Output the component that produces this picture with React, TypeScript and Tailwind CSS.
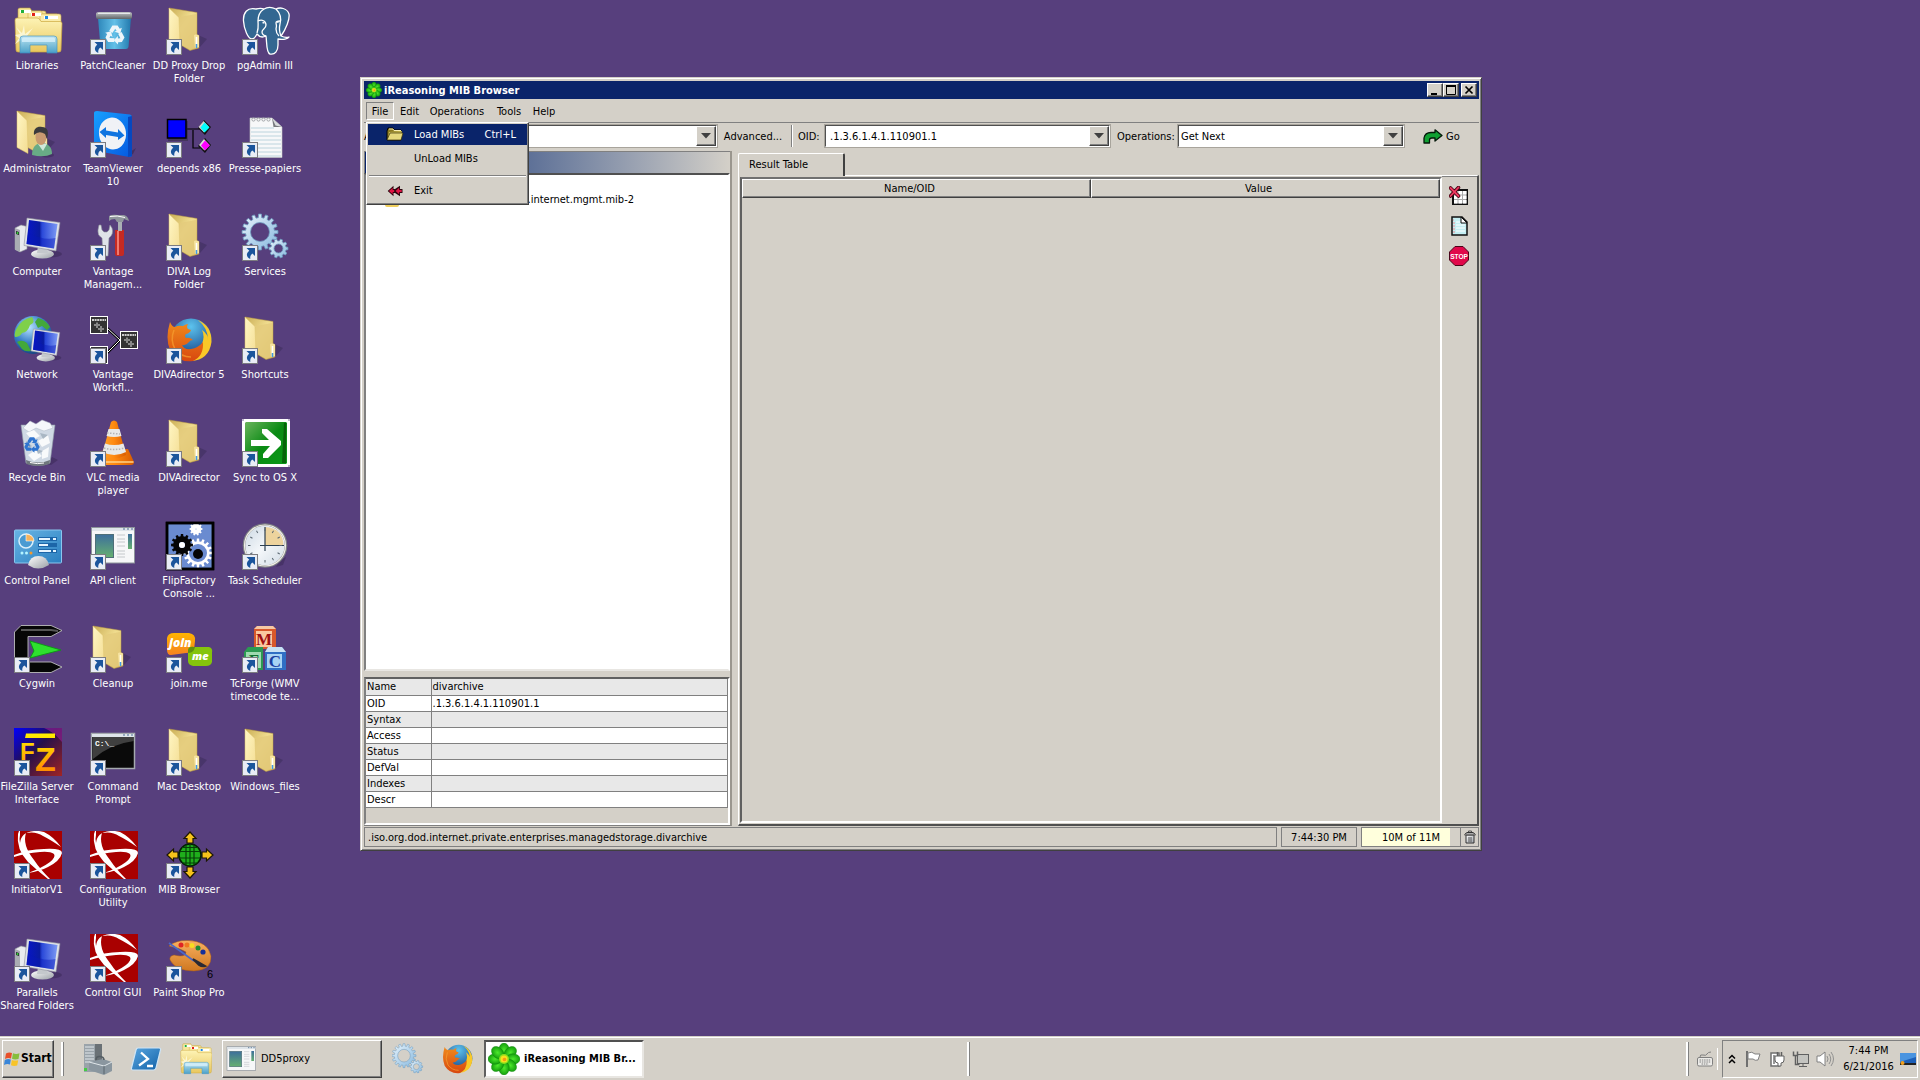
import React from 'react';

type GearProps = { cx: number; cy: number; r: number; hole: number; teeth: number; fill: string; stroke?: string; inner?: string };

function Gear({ cx, cy, r, hole, teeth, fill, stroke = 'none', inner }: GearProps) {
  const points: string[] = [];
  const root = r * 0.8;
  for (let i = 0; i < teeth; i++) {
    const step = (Math.PI * 2) / teeth;
    const a = i * step;
    [[-0.3, root], [-0.2, r], [0.2, r], [0.3, root]].forEach(([k, rad]) => {
      points.push(`${(cx + Math.cos(a + k * step) * rad).toFixed(2)} ${(cy + Math.sin(a + k * step) * rad).toFixed(2)}`);
    });
  }
  const d = `M${points.join('L')}Z M${cx - hole} ${cy}a${hole} ${hole} 0 1 0 ${hole * 2} 0a${hole} ${hole} 0 1 0 ${-hole * 2} 0Z`;
  return (
    <>
      <path d={d} fill={fill} stroke={stroke} strokeWidth="0.8" fillRule="evenodd" />
      {inner && <circle cx={cx} cy={cy} r={hole} fill={inner} />}
    </>
  );
}

function SharedDefs() {
  return (
    <svg className="absolute size-0" aria-hidden="true">
      <defs>
        <linearGradient id="folderBack" x1="0" x2="1" y1="0" y2="1">
          <stop offset="0" stopColor="#c9ad55" /><stop offset=".45" stopColor="#f0dc8e" /><stop offset="1" stopColor="#d8b95c" />
        </linearGradient>
        <linearGradient id="folderFlap" x1="0" x2="1" y1="0" y2="1">
          <stop offset="0" stopColor="#fff6c4" /><stop offset="1" stopColor="#f4dd92" />
        </linearGradient>
        <linearGradient id="libBody" x1="0" x2="0" y1="0" y2="1">
          <stop offset="0" stopColor="#fdf3b5" /><stop offset="1" stopColor="#e9c75e" />
        </linearGradient>
        <linearGradient id="glassBlue" x1="0" x2="0" y1="0" y2="1">
          <stop offset="0" stopColor="#b7e3f5" /><stop offset="1" stopColor="#3f9fd4" />
        </linearGradient>
        <linearGradient id="screenBlue" x1="0" x2="1" y1="0" y2="0">
          <stop offset="0" stopColor="#0716c8" /><stop offset=".42" stopColor="#0a1ca0" /><stop offset=".5" stopColor="#2a48d8" /><stop offset="1" stopColor="#7d9af4" />
        </linearGradient>
        <linearGradient id="metal" x1="0" x2="1" y1="0" y2="1">
          <stop offset="0" stopColor="#ffffff" /><stop offset="1" stopColor="#9aa0a6" />
        </linearGradient>
        <linearGradient id="lid" x1="0" x2="0" y1="0" y2="1">
          <stop offset="0" stopColor="#c5c8ca" /><stop offset="1" stopColor="#5e6467" />
        </linearGradient>
        <linearGradient id="binBlue" x1="0" x2="1" y1="0" y2="0">
          <stop offset="0" stopColor="#2e87ba" /><stop offset=".5" stopColor="#63c0e8" /><stop offset="1" stopColor="#2279ad" />
        </linearGradient>
        <linearGradient id="tvBlue" x1="0" x2="1" y1="0" y2="1">
          <stop offset="0" stopColor="#18a0ff" /><stop offset="1" stopColor="#0558e0" />
        </linearGradient>
        <linearGradient id="gearBlue" x1="0" x2="1" y1="0" y2="1">
          <stop offset="0" stopColor="#e9f4fc" /><stop offset="1" stopColor="#86b8de" />
        </linearGradient>
        <radialGradient id="globe" cx=".4" cy=".3" r=".8">
          <stop offset="0" stopColor="#b8e4ff" /><stop offset=".5" stopColor="#3a80c8" /><stop offset="1" stopColor="#0c3570" />
        </radialGradient>
        <radialGradient id="ffGlobe" cx=".5" cy=".2" r=".8">
          <stop offset="0" stopColor="#5cc3ee" /><stop offset="1" stopColor="#113a80" />
        </radialGradient>
        <linearGradient id="ffFox" x1="0" x2="0" y1="0" y2="1">
          <stop offset="0" stopColor="#f08a1c" /><stop offset="1" stopColor="#d8480f" />
        </linearGradient>
        <linearGradient id="orangeH" x1="0" x2="1" y1="0" y2="0">
          <stop offset="0" stopColor="#ffa22c" /><stop offset=".5" stopColor="#ff8a10" /><stop offset="1" stopColor="#d85c00" />
        </linearGradient>
        <linearGradient id="greenBox" x1="0" x2="1" y1="0" y2="1">
          <stop offset="0" stopColor="#6ab45c" /><stop offset=".5" stopColor="#0a8a14" /><stop offset="1" stopColor="#0a9a18" />
        </linearGradient>
        <linearGradient id="panelBlue" x1="0" x2="1" y1="0" y2="1">
          <stop offset="0" stopColor="#68b5e4" /><stop offset="1" stopColor="#2a7fc0" />
        </linearGradient>
        <linearGradient id="appPane" x1="0" x2="0" y1="0" y2="1">
          <stop offset="0" stopColor="#3d6f9c" /><stop offset="1" stopColor="#66b070" />
        </linearGradient>
        <linearGradient id="clockFace" x1="0" x2="1" y1="0" y2="1">
          <stop offset="0" stopColor="#c9d6e2" /><stop offset=".5" stopColor="#f4f7fa" /><stop offset="1" stopColor="#cfdae4" />
        </linearGradient>
        <linearGradient id="fzBack" x1="0" x2="1" y1="0" y2="1">
          <stop offset="0" stopColor="#0000ff" /><stop offset=".45" stopColor="#25104a" /><stop offset="1" stopColor="#a02424" />
        </linearGradient>
        <linearGradient id="fzMark" gradientUnits="userSpaceOnUse" x1="0" x2="0" y1="5" y2="43">
          <stop offset="0" stopColor="#fff200" /><stop offset="1" stopColor="#ff8c00" />
        </linearGradient>
        <linearGradient id="joinOrange" x1="0" x2="0" y1="0" y2="1">
          <stop offset="0" stopColor="#ffb400" /><stop offset="1" stopColor="#f58220" />
        </linearGradient>
        <radialGradient id="petal" cx=".5" cy=".5" r=".6">
          <stop offset="0" stopColor="#4dea2c" /><stop offset="1" stopColor="#0a9008" />
        </radialGradient>
        <linearGradient id="psBlue" x1="0" x2="1" y1="0" y2="1">
          <stop offset="0" stopColor="#5aa6e0" /><stop offset="1" stopColor="#1262a8" />
        </linearGradient>
        <linearGradient id="palette" x1="0" x2="0" y1="0" y2="1">
          <stop offset="0" stopColor="#f8b060" /><stop offset="1" stopColor="#d07820" />
        </linearGradient>
      </defs>
    </svg>
  );
}

function ShortcutArrow() {
  return (
    <g>
      <rect x="0.5" y="32.5" width="15" height="15" fill="#e9edf5" stroke="#7c7c80" />
      <path d="M4.500 35H13v8l-2.600-2.400C8.500 42 8 43.500 8.300 46C4.500 44.500 3.500 40.500 7.300 37.800Z" fill="#1b559c" />
    </g>
  );
}

function FolderShape() {
  return (
    <g>
      <path d="M32 28l9 4-7 8-8 3z" fill="#2f2148" opacity=".35" />
      <path d="M3 1L31 5.500V27.500L33 28.500V41L24 43.500L13 37Z" fill="url(#folderBack)" stroke="#bb9c45" strokeWidth=".5" />
      <path d="M14 10L30 7V28l2 1.500V40L24 42.500 14 36Z" fill="#e3cb7c" opacity=".8" />
      <path d="M3 1L13 10.500L14 37V43.500L3 37.500Z" fill="url(#folderFlap)" stroke="#d9bd66" strokeWidth=".5" />
      <path d="M28 28.500q1-2 5 0V40l-4 1z" fill="#f6e3a0" />
      <path d="M30.500 37v4" stroke="#3f9be8" strokeWidth="1.500" />
      <path d="M30.500 30v7" stroke="#fff" strokeWidth="1.500" />
    </g>
  );
}

function MonitorShape() {
  return (
    <g>
      <ellipse cx="36" cy="41" rx="12" ry="3.500" fill="#2f2148" opacity=".4" />
      <ellipse cx="28.500" cy="41" rx="11.500" ry="4.500" fill="url(#metal)" />
      <path d="M24 33h9l1 7h-11z" fill="#c4c8cc" />
      <path d="M13 5L46 9.500L42 38L10 32.500Z" fill="#dfe2e6" stroke="#8b8f98" strokeWidth=".6" />
      <path d="M15 7L43.500 11L40 35.500L12.500 31Z" fill="url(#screenBlue)" />
      <path d="M12.500 31L14 20Q30 28 41.500 25L40 35.500Z" fill="#0818b8" opacity=".45" />
    </g>
  );
}

function TowerShape() {
  return (
    <g>
      <path d="M1 15L7 12L13 13.500V36L6 39L1 36.500Z" fill="#e9ebee" stroke="#8f9399" strokeWidth=".6" />
      <path d="M1 15L6 17V39L1 36.500Z" fill="#a9adb3" />
      <path d="M2 18l3 1v3l-3-1z" fill="#202428" /><circle cx="3.500" cy="20" r="1" fill="#35e03a" />
    </g>
  );
}

function LibrariesIcon() {
  return (
    <g>
      <path d="M4 2.500Q4 1 6 1H16l2 3h12q2 0 2 2V20H4z" fill="#f7e69a" stroke="#b99a3a" strokeWidth=".6" />
      <path d="M14 6q0-2 2-2h11l2 3h14v15H14z" fill="#f9e9a2" stroke="#c9a94a" strokeWidth=".6" />
      <path d="M26 9q0-2 2-2h17q2 0 2 2v14H26z" fill="#faecaa" stroke="#c9a94a" strokeWidth=".6" />
      <path d="M6 3h11v3H6z M17 6h10v3H17z M30 9h14v3H30z" fill="#fff" />
      <path d="M7 3h3v3H7z" fill="#22b03a" /><path d="M18 6h3v3h-3z" fill="#e2231a" /><path d="M31 9h3v3h-3z" fill="#1b88e0" />
      <path d="M1 13q0-2 2-2H23q2 0 3 2l1 1.500H46q2 0 2 2L47 43q0 2-2 2H4q-2 0-2-2z" fill="url(#libBody)" stroke="#cda93f" strokeWidth=".7" />
      <path d="M10 18l1 9 8-6-6 8 9 1-9 2 5 6-7-5-2 8-2-8-6 4 4-6-4-3 5-1-4-7 6 6z" fill="#fffde8" opacity=".75" />
      <path d="M6 32q0-3 3-3H40q3 0 3 3V46H33V38H16v8H6z" fill="url(#glassBlue)" stroke="#3c93c6" strokeWidth=".7" opacity=".92" />
      <path d="M8 32q0-1.500 1.500-1.500h30q1.500 0 1.500 1.500v3H8z" fill="#dff5ff" opacity=".7" />
    </g>
  );
}

function RecycleMark({ x, y, fill, s }: { x: number; y: number; fill: string; s: number }) {
  return (
    <g transform={`translate(${x} ${y}) scale(${s})`} fill={fill}>
      {[0, 120, 240].map((a) => (
        <path key={a} transform={`rotate(${a})`} d="M-5.500 -4L-2.500 -9H2.500L4.500 -6L6.500 -7L5 -1.500L-.5 -3L1.500 -4L.2 -6L-2.500 -2Z" />
      ))}
    </g>
  );
}

function PatchCleanerIcon() {
  return (
    <g>
      <path d="M8 11H41L38.500 40Q38 42 36 42H13Q11 42 10.500 40Z" fill="url(#binBlue)" />
      <path d="M6 7q0-2 3-2H39q3 0 3 2v3q0 2-2 2H8q-2 0-2-2z" fill="url(#lid)" />
      <path d="M8 6.500h32" stroke="#e5e8ea" />
      <RecycleMark x={25} y={28} fill="#eef6fa" s={1.05} />
    </g>
  );
}

function ElephantIcon() {
  return (
    <g fill="#336791" stroke="#fff" strokeWidth="1.300" strokeLinejoin="round">
      <path d="M14 2C5 0 1 6 1.500 14C2 22 6 32 10 32C12 32 14 29 15 27C18 31 22 30 24 29C25 35 24 46 28 47C33 48 36 44 36 38L36 32C41 33 46 32 47 30C44 31 41 30 39 29C44 22 48 12 47 7C45 1 38 0 34 2C30 0 25 0 22 2C19 1 16 1.500 14 2Z" />
      <path d="M22 2C17 5 16 9 16 14C16 18 17 20 15 26" fill="none" />
      <path d="M34 2C38 6 40 10 38 17C37 21 37 24 39 29" fill="none" />
      <path d="M16 14C20 12 24 14 24 18C24 22 20 22 20 25C20 27 22 29 24 29" fill="none" />
      <path d="M38 14Q34 14 34 16Q35 19 34 22Q34 26 37 29" fill="none" />
      <path d="M20.500 15.500l2 .5M35 15l1.500 .5" />
    </g>
  );
}

function PersonOverlay() {
  return (
    <g>
      <ellipse cx="33" cy="45" rx="7" ry="2.500" fill="#2f2148" opacity=".4" />
      <path d="M18 45C18 37 22 33 28 33C34 33 38 37 38 44Q30 48 18 45Z" fill="#68ab86" />
      <path d="M24 34l5 7 4-7z" fill="#cfe9da" />
      <ellipse cx="27" cy="27" rx="5.500" ry="8" fill="#c89a70" />
      <path d="M20 25C19 18 24 16 28 17C34 17 35 22 33 29L31 24Q25 20 20 25Z" fill="#3a3a3c" />
    </g>
  );
}

function TeamViewerIcon() {
  return (
    <g>
      <path d="M40 42l6-4-3 6-6 3z" fill="#2f2148" opacity=".5" />
      <path d="M4 3Q4 1 7 1L40 4.500Q42 5 42 7V45Q42 47.500 39 47L7 41Q4 40.500 4 38Z" fill="url(#tvBlue)" />
      <path d="M38 7l4-1v40l-4 1z" fill="#0748c0" />
      <ellipse cx="22.500" cy="23.500" rx="13.500" ry="16" fill="#f0f2f6" transform="rotate(-8 22.500 23.500)" />
      <path d="M9.500 22L16 17V20.500L28 22.500V19L34.500 25.500L28 30V27L16 25V28Z" fill="#0f74e0" />
    </g>
  );
}

function DependsIcon() {
  return (
    <g>
      <path d="M21 19H34M27 20V38H34" stroke="#000" fill="none" strokeWidth="1.200" />
      <path d="M2 11h20v20H2z" fill="#222" opacity=".35" />
      <rect x="1.500" y="9.500" width="18.500" height="18.500" fill="#00f" stroke="#000" strokeWidth="1.500" />
      <path d="M38 10l7 7-6 8-7-7z M39 28l6 7-6 8-7-7z" fill="#111" />
      <path d="M37.500 11l5.500 6-5 5.500-5.500-5.500z" fill="#cfcfcf" /><path d="M38.500 12.500l5 5-5 5-4-5z" fill="#0ff" />
      <path d="M38 29l5.500 6-5 5.500-5.500-5.500z" fill="#ddd" /><path d="M39 30.500l5 5-5 5-4-5z" fill="#f0f" />
    </g>
  );
}

function NotepadIcon() {
  return (
    <g>
      <path d="M8 8H30L40 17V47.500H8Z" fill="#f7f8f9" stroke="#bfc2c5" strokeWidth=".6" />
      <path d="M9 18h23M9 22h30M9 26h30M9 30h30M9 34h30M9 38h30M9 42h30M9 46h30" stroke="#bcd4dd" strokeWidth="1" />
      <path d="M30 8L31.500 17H40Z" fill="#777a7d" /><path d="M30 8l3.500 7.500L40 17z" fill="#d9dbdd" />
      {[11.5, 16.5, 21.5, 26.5].map((x) => <circle key={x} cx={x} cy="9.500" r="1.600" fill="none" stroke="#9a9da0" strokeWidth=".9" />)}
    </g>
  );
}

function ToolsIcon() {
  return (
    <g>
      <path d="M25 17h9v24q0 2-2 2h-5q-2 0-2-2z" fill="#c62a22" /><path d="M27 18h2v24h-2z" fill="#ef7a70" />
      <path d="M28 7h4v11h-4z" fill="#aab0b5" />
      <path d="M19 3Q22 1 28 2H34Q38 3 39 8L34 6 33 9H27L25 6Q21 6 19 8Z" fill="#8f969c" /><path d="M20 3.500q7-1.500 15 1" stroke="#fff" fill="none" />
      <path d="M9 12L8 17Q7 22 12 25L13 43h5L19 25Q24 21 22 15L20 12 19 17 17 19H14L12 17 11 12Z" fill="#dfe3e8" stroke="#8f969c" strokeWidth=".6" />
    </g>
  );
}

function ServicesIcon() {
  return (
    <g>
      <Gear cx={18} cy={19} r={18} hole={9.500} teeth={16} fill="url(#gearBlue)" stroke="#6f9dc0" />
      <Gear cx={36.500} cy={35.500} r={9.500} hole={4.500} teeth={10} fill="url(#gearBlue)" stroke="#6f9dc0" />
    </g>
  );
}

function NetworkIcon() {
  return (
    <g>
      <circle cx="19" cy="19" r="19" fill="url(#globe)" />
      <path d="M3 12Q8 3 18 1Q22 6 16 9Q14 16 8 17Q6 21 1 21Q0 16 3 12Z" fill="#7fd04a" />
      <path d="M24 2q8 2 12 9l-3 3-5-4-4 2-3-6z M3 26q5-3 10 1l4 8q-6 1-9-2z" fill="#43a83a" />
      <g transform="translate(9 9) scale(.8)"><MonitorShape /></g>
    </g>
  );
}

function WorkflowIcon() {
  const node = (x: number, y: number) => (
    <g>
      <rect x={x + 0.5} y={y + 0.5} width="17" height="17" fill="#333" stroke="#fff" />
      <path d={`M${x + 2} ${y + 4}h14`} stroke="#fff" strokeWidth="1.600" strokeDasharray="2 .6" />
      <path d={`M${x + 4} ${y + 9}h6M${x + 7} ${y + 6.500}v5.500M${x + 8} ${y + 13}h6M${x + 11} ${y + 10}v6`} stroke="#888" strokeWidth="2" />
    </g>
  );
  return (
    <g>
      <path d="M17 12L30 24L17 37" stroke="#000" strokeWidth="2.600" fill="none" /><path d="M17 12L30 24L17 37" stroke="#fff" fill="none" />
      {node(0, 0)}{node(30, 15)}{node(0, 30)}
    </g>
  );
}

function FirefoxIcon() {
  return (
    <g>
      <circle cx="25" cy="23" r="20.500" fill="url(#ffGlobe)" />
      <path d="M32 4Q46 10 45.500 26Q43 44 25 45Q35 40 36 28Q39 20 36 14Q42 18 42 24Q42 12 32 4Z" fill="#f9c828" />
      <path d="M4 6Q6 11 9 11Q12 9 17 10Q20 8 22 8Q20 11 22 13L25 14Q24 17 20 18Q18 20 20 22Q24 21 27 24Q24 24 23 26Q20 30 16 29Q18 34 25 33Q32 32 37 26Q38 40 27 45Q12 47 4 34Q-1 22 4 6Z" fill="url(#ffFox)" />
      <path d="M8 14Q4 24 9 33Q15 41 25 41" stroke="#f7a030" strokeWidth="1.500" fill="none" opacity=".7" />
    </g>
  );
}

function RecycleBinIcon() {
  return (
    <g>
      <path d="M38 38l6 3-7 5-6-1z" fill="#2f2148" opacity=".4" />
      <path d="M7 6L41 6L36 44Q24 49 12 44Z" fill="#cfd9e4" stroke="#8d98a5" strokeWidth=".6" />
      <path d="M9 9L16 2L22 5L28 1L36 4L39 9L30 12L22 9L15 13Z" fill="#f5f8fb" stroke="#aeb9c4" strokeWidth=".5" />
      <path d="M12 14l8-3 6 6-8 4zM24 22l10-6 2 8-8 4zM14 36l8-5 6 6-8 5zM28 32l7-4-1 10-6 2z" fill="#fff" opacity=".85" />
      <path d="M12 22l6 5-5 4zM26 14l8 2-5 4zM22 30l7 2-5 3z" fill="#9eacba" opacity=".8" />
      <RecycleMark x={18} y={26} fill="#2f74cf" s={0.85} />
      <path d="M12 41Q24 46 36 41L35.500 45Q24 49 12.500 45Z" fill="#6f777d" /><path d="M16 43.500q8 2 14 .5" stroke="#fff" fill="none" />
    </g>
  );
}

function VlcIcon() {
  return (
    <g>
      <path d="M9 32L38 30L44 43Q44 46 41 46H8Q4 46 5 42Z" fill="url(#orangeH)" />
      <path d="M5.500 43h38" stroke="#ffd48a" strokeWidth="1.500" />
      <path d="M21 3Q24 0 27 3L36 36Q24 43 12 36Z" fill="url(#orangeH)" />
      <path d="M18.500 10h11l2 7q-7.500 2-15 0z M15 24.500q9 3 18.500 0L36 33q-12 6-23.500 0z" fill="#e9e9e6" />
      <path d="M17 14l13 1M14 29q10 3 20 0" stroke="#b4b4b4" strokeWidth="1.500" strokeDasharray="1.500 1.500" fill="none" />
    </g>
  );
}

function SyncIcon() {
  return (
    <g>
      <rect x="0" y="0" width="48" height="48" fill="#fff" />
      <path d="M4 3H44L45 4V44L44 45H4L3 44V4Z" fill="url(#greenBox)" />
      <path d="M42 4h2v40h-4z" fill="#055006" opacity=".7" />
      <path d="M9 21h18l-7-7v-4h5L39 22v4L26 39h-5v-4l7-8H9z" fill="#fff" />
      <path d="M0 0h2v2H0zM46 0h2v2h-2zM46 46h2v2h-2z" fill="#bdb3cc" />
    </g>
  );
}

function ControlPanelIcon() {
  return (
    <g>
      <rect x=".5" y="8" width="47" height="33" rx="1" fill="url(#panelBlue)" stroke="#8ac6ee" />
      <circle cx="12" cy="19" r="7" fill="#4a9bd2" stroke="#d9effb" strokeWidth="1.500" />
      <path d="M12 19V12Q20 13 20 19Z" fill="#f6b35c" stroke="#fff" strokeWidth=".6" />
      <g fill="#1c66a8"><rect x="24" y="15" width="19" height="4" /><rect x="24" y="21" width="19" height="4" /><rect x="24" y="27" width="19" height="4" /></g>
      <g fill="#e6f5ff"><rect x="25" y="16" width="11" height="2" /><rect x="25" y="22" width="9" height="2" /><rect x="25" y="28" width="12" height="2" /><rect x="39" y="16" width="3" height="2" /><rect x="39" y="28" width="3" height="2" /></g>
      <circle cx="8" cy="31" r="1.500" fill="#b5f4ff" /><circle cx="12.500" cy="31" r="1.500" fill="#b5f4ff" /><circle cx="17" cy="31" r="1.500" fill="#f09a30" />
      <path d="M14 43Q16 34 24.500 34Q33 34 35 43Q24 50 14 43Z" fill="url(#metal)" />
    </g>
  );
}

function AppWindowIcon() {
  return (
    <g>
      <rect x="1.500" y="5.500" width="43" height="35.500" fill="#f6f7f8" stroke="#8d949b" />
      <path d="M2 6h42v3H2z" fill="#dfe5ea" /><path d="M33 7h2M37 7h2M41 7h2" stroke="#4d6f93" strokeWidth="1.200" />
      <rect x="5.500" y="12.500" width="18" height="23" fill="url(#appPane)" stroke="#4e6f78" />
      <path d="M27 13h8M27 17h8M27 20h8M27 24h8M27 29h8M27 32h8M27 35h8" stroke="#c4c8cb" />
      <rect x="38" y="12" width="4" height="15" fill="url(#appPane)" />
    </g>
  );
}

function FlipFactoryIcon() {
  return (
    <g>
      <rect x="1" y="1" width="46" height="46" fill="#6a8bd0" stroke="#000" strokeWidth="2.500" />
      <Gear cx={30} cy={7} r={6.500} hole={0.500} teeth={10} fill="#fff" />
      <Gear cx={32} cy={31} r={14.500} hole={9} teeth={16} fill="#fff" />
      <circle cx="32" cy="32" r="5" fill="#050505" />
      <Gear cx={16} cy={23} r={11} hole={3} teeth={12} fill="#050505" inner="#fff" />
      <rect x="1" y="1" width="46" height="46" fill="none" stroke="#000" strokeWidth="2.500" />
    </g>
  );
}

function ClockIcon() {
  return (
    <g>
      <path d="M38 38l6-3-3 8-7 2z" fill="#2f2148" opacity=".4" />
      <circle cx="23" cy="23.500" r="21" fill="url(#clockFace)" stroke="#7c7f84" strokeWidth="2.600" />
      <circle cx="23" cy="23.500" r="20.500" fill="none" stroke="#f1eee6" strokeWidth="1.200" />
      <path d="M23 23.500V5Q41 6 41.500 23.500Z" fill="#edd39d" />
      <path d="M23 5v24M18 23.500h24" stroke="#2e4050" strokeWidth="1.200" />
      {Array.from({ length: 12 }, (_, i) => <path key={i} d="M23 6.500v2.500" transform={`rotate(${i * 30} 23 23.500)`} stroke="#5a6670" />)}
    </g>
  );
}

function CygwinIcon() {
  return (
    <g stroke="#bcbcbc" strokeWidth=".9">
      <path d="M7 .5H37L48 5.500L37 11.500H14V37H37L48 42L37 47.500H7L.5 41V7Z" fill="#060606" />
      <path d="M7 5h30l7 1" stroke="#555" strokeWidth="2" fill="none" />
      <path d="M16 16L47 25L16 33L20 26Z" fill="#2ee02e" stroke="#0a9a12" />
    </g>
  );
}

function JoinIcon() {
  return (
    <g fontFamily="'Open Sans', sans-serif" fontWeight="800" fontStyle="italic" fontSize="12" fill="#fff">
      <path d="M1 13Q2 8 8 8H23Q30 9 29 16L28 25Q26 28 20 28L5 30Q1 30 1 25Z" fill="url(#joinOrange)" />
      <path d="M22 25Q23 21 28 22H43Q47 23 46 28V37Q45 41 40 41H27Q22 40 22 36Z" fill="#85c40c" />
      <path d="M22 25Q23 21 28 22h1l-1 3q-2 3-6 3z" fill="#5f8f10" />
      <text x="3" y="22">join</text><text x="26" y="35" fontSize="11">me</text>
    </g>
  );
}

function BlocksIcon() {
  return (
    <g fontFamily="'Liberation Serif', serif" fontWeight="700" fontSize="17" textAnchor="middle">
      <path d="M12 4l3-3h16l3 3v20H12z" fill="#d8582a" /><path d="M12 4l3-3h16l3 3z" fill="#f5c8a4" /><rect x="14" y="6" width="16" height="16" fill="#fbc9a0" />
      <path d="M2 27l4-5h15v23H2z" fill="#2c9a52" /><rect x="4" y="27" width="15" height="16" fill="#9fdab0" />
      <path d="M23 27l3-5h14l4 5v18H23z" fill="#2f6fc4" /><path d="M23 27l3-5h14l4 5z" fill="#c8e2f4" /><rect x="25" y="29" width="15" height="14" fill="#a8d4f4" />
      <text x="22" y="20" fill="#a01010">M</text><text x="33" y="42" fill="#1a3ea0">C</text><text x="12" y="41" fill="#0f7030">F</text>
    </g>
  );
}

function FileZillaIcon() {
  return (
    <g fontFamily="'Liberation Sans', sans-serif" fontWeight="700" fill="url(#fzMark)">
      <rect width="48" height="48" fill="url(#fzBack)" />
      <path d="M30 0H48V14Q40 4 30 0Z" fill="#8a2090" opacity=".7" />
      <path d="M12 5.500H41V10H11Z" />
      <text x="6" y="32" fontSize="24">F</text>
      <text x="21" y="43" fontSize="34">Z</text>
    </g>
  );
}

function CommandIcon() {
  return (
    <g>
      <rect x="1.500" y="5.500" width="43" height="35" fill="#0a0a0a" stroke="#a4a9ae" strokeWidth="1.500" />
      <path d="M2 6h42v3H2z" fill="#dfe5ea" /><path d="M33 7h2M37 7h2M41 7h2" stroke="#4d6f93" strokeWidth="1.200" />
      <path d="M3 9h41v4Q20 16 3 31z" fill="#555" opacity=".7" />
      <text x="5" y="18" fontFamily="'Liberation Mono', monospace" fontWeight="700" fontSize="8" fill="#fff">C:\_</text>
    </g>
  );
}

function SwooshIcon() {
  return (
    <g>
      <rect width="48" height="48" fill="#a90000" />
      <path d="M4 3Q2 18 14 31Q24 40 34 48H36Q26 38 20 29Q8 14 12 2Q22 0 29 5Q37 9 47 16Q40 6 30 1L25 0H5Z" fill="#fff" />
      <path d="M6 4Q5 8 6 12Q7 1 20 0H6z" fill="#a90000" />
      <path d="M0 24Q14 18 30 18Q48 17 48 22Q46 30 34 36Q26 40 14 42Q28 37 36 31Q42 26 40 23Q36 20 26 21Q12 22 0 26Z" fill="#fff" />
    </g>
  );
}

function MibIcon() {
  const arrow = <path d="M24 1L30 7.500H27V12H21V7.500H18Z" fill="#f6c21c" stroke="#1c1604" strokeWidth="1.200" />;
  return (
    <g>
      {[0, 90, 180, 270].map((a) => <g key={a} transform={`rotate(${a} 24 24)`}>{arrow}</g>)}
      <circle cx="24" cy="24" r="11" fill="#1fae1c" stroke="#041c04" strokeWidth="1.500" />
      <path d="M13.500 20.500h21M13.500 27h21M16 32h16M20 13.500v21M28 13.500v21M24 13v22M16 16.500h16" stroke="#063f08" strokeWidth="1.200" />
    </g>
  );
}

function PaletteIcon() {
  return (
    <g>
      <path d="M3 12Q10 6 22 6.500Q42 7 45 22Q46 36 28 37Q10 37 4 26Q3 22 8 21Q20 24 20 18Q14 14 3 12Z" fill="url(#palette)" stroke="#a85a14" strokeWidth=".5" />
      <circle cx="15" cy="11" r="2.500" fill="#e02424" /><circle cx="21" cy="11" r="2.500" fill="#f07820" /><circle cx="26" cy="11.500" r="2.500" fill="#f6dc20" /><circle cx="32" cy="14" r="2.500" fill="#1f8a34" /><circle cx="37" cy="18" r="2.600" fill="#16309a" />
      <path d="M3 9L28 27" stroke="#4a68c8" strokeWidth="1.600" /><path d="M27 25L39 32Q36 33 33 31Z" fill="#2a2a34" stroke="#2a2a34" strokeWidth="2" />
      <text x="41" y="44" fontFamily="'Liberation Sans', sans-serif" fontSize="11" fill="#000">6</text>
    </g>
  );
}

type DesktopItem = { label: string; icon: React.ReactNode; shortcut?: boolean };

const desktopItems: DesktopItem[] = [
  { label: 'Libraries', icon: <LibrariesIcon /> },
  { label: 'Administrator', icon: <><FolderShape /><PersonOverlay /></> },
  { label: 'Computer', icon: <><TowerShape /><MonitorShape /></> },
  { label: 'Network', icon: <NetworkIcon /> },
  { label: 'Recycle Bin', icon: <RecycleBinIcon /> },
  { label: 'Control Panel', icon: <ControlPanelIcon /> },
  { label: 'Cygwin', icon: <CygwinIcon />, shortcut: true },
  { label: 'FileZilla Server\nInterface', icon: <FileZillaIcon />, shortcut: true },
  { label: 'InitiatorV1', icon: <SwooshIcon />, shortcut: true },
  { label: 'Parallels\nShared Folders', icon: <><TowerShape /><MonitorShape /></>, shortcut: true },
  { label: 'PatchCleaner', icon: <PatchCleanerIcon />, shortcut: true },
  { label: 'TeamViewer\n10', icon: <TeamViewerIcon />, shortcut: true },
  { label: 'Vantage\nManagem...', icon: <ToolsIcon />, shortcut: true },
  { label: 'Vantage\nWorkfl...', icon: <WorkflowIcon />, shortcut: true },
  { label: 'VLC media\nplayer', icon: <VlcIcon />, shortcut: true },
  { label: 'API client', icon: <AppWindowIcon />, shortcut: true },
  { label: 'Cleanup', icon: <FolderShape />, shortcut: true },
  { label: 'Command\nPrompt', icon: <CommandIcon />, shortcut: true },
  { label: 'Configuration\nUtility', icon: <SwooshIcon />, shortcut: true },
  { label: 'Control GUI', icon: <SwooshIcon />, shortcut: true },
  { label: 'DD Proxy Drop\nFolder', icon: <FolderShape />, shortcut: true },
  { label: 'depends x86', icon: <DependsIcon />, shortcut: true },
  { label: 'DIVA Log\nFolder', icon: <FolderShape />, shortcut: true },
  { label: 'DIVAdirector 5', icon: <FirefoxIcon />, shortcut: true },
  { label: 'DIVAdirector', icon: <FolderShape />, shortcut: true },
  { label: 'FlipFactory\nConsole ...', icon: <FlipFactoryIcon />, shortcut: true },
  { label: 'join.me', icon: <JoinIcon />, shortcut: true },
  { label: 'Mac Desktop', icon: <FolderShape />, shortcut: true },
  { label: 'MIB Browser', icon: <MibIcon />, shortcut: true },
  { label: 'Paint Shop Pro', icon: <PaletteIcon />, shortcut: true },
  { label: 'pgAdmin III', icon: <ElephantIcon />, shortcut: true },
  { label: 'Presse-papiers', icon: <NotepadIcon />, shortcut: true },
  { label: 'Services', icon: <ServicesIcon />, shortcut: true },
  { label: 'Shortcuts', icon: <FolderShape />, shortcut: true },
  { label: 'Sync to OS X', icon: <SyncIcon />, shortcut: true },
  { label: 'Task Scheduler', icon: <ClockIcon />, shortcut: true },
  { label: 'TcForge (WMV\ntimecode te...', icon: <BlocksIcon />, shortcut: true },
  { label: 'Windows_files', icon: <FolderShape />, shortcut: true },
];

function Flower({ className }: { className: string }) {
  return (
    <svg viewBox="0 0 32 32" className={className} aria-hidden="true">
      {[0, 45, 90, 135, 180, 225, 270, 315].map((a) => (
        <ellipse key={a} cx="16" cy="7" rx="5.200" ry="7" fill="url(#petal)" stroke="#0a8208" strokeWidth=".4" transform={`rotate(${a} 16 16)`} />
      ))}
      <circle cx="16" cy="16" r="5" fill="#8fdf1e" />
      <circle cx="16" cy="16" r="3.500" fill="#f6e01c" />
      <circle cx="16.500" cy="16.500" r="1.800" fill="#f39a12" />
    </svg>
  );
}

const raised = 'border border-t-white border-l-white border-r-[#404040] border-b-[#404040] shadow-[inset_-1px_-1px_0_#808080]';
const sunken = 'border-2 border-t-[#505050] border-l-[#505050] border-r-white border-b-white outline outline-1 -outline-offset-1 outline-[#a8a49c]';

function ComboArrow() {
  return (
    <span className={`flex h-5 w-5 shrink-0 items-center justify-center bg-[#d4d0c8] ${raised}`}>
      <svg viewBox="0 0 10 6" className="h-[6px] w-[10px]" aria-hidden="true"><path d="M0 0h10L5 5.500z" fill="#404040" /></svg>
    </span>
  );
}

function TitleBar() {
  const button = `flex h-[14px] items-center justify-center bg-[#d4d0c8] ${raised}`;
  return (
    <header className="flex h-[18px] items-center bg-[#0a246a] pr-[2px] pl-[2px] text-white">
      <Flower className="mr-[2px] size-4" />
      <h1 className="flex-1 font-bold">iReasoning MIB Browser</h1>
      <button aria-label="Minimize" className={`${button} w-4`}><svg viewBox="0 0 10 10" className="size-[10px]"><path d="M1 8h6v2H1z" fill="#000" /></svg></button>
      <button aria-label="Maximize" className={`${button} mr-[2px] w-4`}><svg viewBox="0 0 10 10" className="size-[10px]"><path d="M.5 1v8.500h9V1M.5 1h9" stroke="#000" fill="none" /><path d="M0 0h10v2H0z" fill="#000" /></svg></button>
      <button aria-label="Close" className={`${button} w-4`}><svg viewBox="0 0 10 10" className="size-[10px]"><path d="M1.500 1.500l7 7M8.500 1.500l-7 7" stroke="#000" strokeWidth="1.700" /></svg></button>
    </header>
  );
}

function FileMenu() {
  return (
    <div role="menu" className="absolute top-5 left-0 z-20 w-[163px] border border-t-white border-l-white border-r-[#404040] border-b-[#404040] bg-[#d4d0c8] p-[1px] shadow-[inset_-1px_-1px_0_#808080]">
      <button role="menuitem" className="flex h-[21px] w-full items-center bg-[#0a246a] pr-[11px] text-white">
        <svg viewBox="0 0 18 14" className="ml-[18px] h-[14px] w-[18px]" aria-hidden="true">
          <path d="M1 4V13H15V3H8L7 1H2Z" fill="#8a7a20" stroke="#000" /><path d="M3 5L16 4 14.500 12H2z" fill="#c8b950" /><path d="M1 13L4 6H17L15 13Z" fill="#e6d97c" stroke="#3a3208" strokeWidth=".7" /><path d="M3 2h4l1 1.500h7" stroke="#f8eeb0" fill="none" />
        </svg>
        <span className="ml-[10px] flex-1 text-left">Load MIBs</span>
        <span>Ctrl+L</span>
      </button>
      <button role="menuitem" className="flex h-[27px] w-full items-center pl-[46px] text-black">UnLoad MIBs</button>
      <hr className="mx-[1px] mt-[3px] mb-[2px] h-[2px] border-t border-b border-t-[#808080] border-b-white" />
      <button role="menuitem" className="flex h-6 w-full items-center text-black">
        <svg viewBox="0 0 16 12" className="ml-[19px] h-3 w-4" aria-hidden="true">
          <path d="M6.500 .7V4H8L13 .7V4H15.500V8H13V11.300L8 8H6.500V11.300L.7 6Z" fill="#2a040c" />
          <path d="M5.700 2.700V5H7.200V7H5.700V9.300L2 6ZM12.200 2.700V5H14.700V7H12.200V9.300L8.500 6Z" fill="#e01444" />
        </svg>
        <span className="ml-[11px]">Exit</span>
      </button>
    </div>
  );
}

function MenuBar() {
  return (
    <nav className="flex h-6 items-center border-b border-[#808080] pl-[2px]">
      <div className="relative">
        <button className="h-[18px] w-7 border border-t-[#808080] border-l-[#808080] border-r-white border-b-white pt-[1px] text-center">File</button>
        <FileMenu />
      </div>
      <button className="w-[31px] pt-[1px]">Edit</button>
      <button className="w-[64px] pt-[1px]">Operations</button>
      <button className="w-[40px] pt-[1px]">Tools</button>
      <button className="w-[30px] pt-[1px]">Help</button>
    </nav>
  );
}

function Toolbar() {
  return (
    <div className="flex h-7 items-center pb-[2px]">
      <label htmlFor="address" className="w-[46px] shrink-0">Address:</label>
      <div className={`flex h-6 w-[308px] items-center bg-white ${sunken}`}>
        <input id="address" className="min-w-0 flex-1 outline-none" />
        <ComboArrow />
      </div>
      <button className="mr-[3px] w-[70px] text-center">Advanced...</button>
      <span className="h-[22px] w-[2px] border-l border-l-[#808080] bg-white" />
      <label htmlFor="oid" className="ml-[5px] w-[26px]">OID:</label>
      <div className={`flex h-6 w-[287px] items-center bg-white ${sunken}`}>
        <input id="oid" defaultValue=".1.3.6.1.4.1.110901.1" className="min-w-0 flex-1 pl-1 outline-none" />
        <ComboArrow />
      </div>
      <label htmlFor="operation" className="ml-[6px] w-[60px]">Operations:</label>
      <div className={`flex h-6 w-[228px] items-center bg-white ${sunken}`}>
        <select id="operation" className="h-5 min-w-0 flex-1 appearance-none pl-[2px] outline-none"><option>Get Next</option></select>
        <ComboArrow />
      </div>
      <button className="ml-[18px] flex items-center gap-[3px]">
        <svg viewBox="0 0 20 15" className="h-[15px] w-5" aria-hidden="true">
          <path d="M1 14V9Q2 3.500 8 3.500H12V.8L19 6.500L12 12V9H9Q6.500 9 6.500 11V14Z" fill="#10a032" stroke="#04180a" strokeWidth="1.300" strokeLinejoin="round" />
        </svg>
        Go
      </button>
    </div>
  );
}

const details: [string, string][] = [
  ['Name', 'divarchive'], ['OID', '.1.3.6.1.4.1.110901.1'], ['Syntax', ''], ['Access', ''],
  ['Status', ''], ['DefVal', ''], ['Indexes', ''], ['Descr', ''],
];

function LeftPane() {
  return (
    <section className="mr-[6px] flex w-[368px] shrink-0 flex-col border-r-2 border-r-[#9a968e] border-b border-b-[#808080]">
      <div className="h-[22px] shrink-0 border-t border-l border-[#808080] bg-linear-to-r from-[#0a246a] to-[#d4d0c8]" />
      <div className="flex-1 border-t-2 border-r-2 border-b-2 border-l-2 border-t-[#505050] border-r-white border-b-[#e8e6e2] border-l-[#808080] bg-white pt-4">
        <div className="flex h-4 items-center pl-[18px] whitespace-nowrap">
          <svg viewBox="0 0 16 16" className="mr-[3px] h-4 w-4" aria-hidden="true"><path d="M1 4Q1 2 3 2H6L8 4H14Q15 4 15 6V14Q15 16 13 16H3Q1 16 1 14Z" fill="#f0cf5c" /></svg>
          RFC1213-MIB.iso.org.dod.internet.mgmt.mib-2
        </div>
      </div>
      <div className="mt-[6px] h-[148px] shrink-0 border-t-2 border-l-2 border-r-2 border-b-2 border-t-[#606060] border-l-[#808080] border-r-white border-b-white">
        <table className="w-full table-fixed border-collapse">
          <tbody>
            {details.map(([name, value], i) => (
              <tr key={name} className={i % 2 ? 'h-4 bg-white' : 'h-4 bg-[#e8e8e8]'}>
                <th scope="row" className="h-4 w-[65px] border-r border-b border-[#808080] p-0 pl-[1px] text-left font-normal">{name}</th>
                <td className="h-4 border-r border-b border-[#808080] p-0 pl-[1px]">{value}</td>
              </tr>
            ))}
          </tbody>
        </table>
      </div>
    </section>
  );
}

function RightPane() {
  const th = `h-[19px] w-1/2 bg-[#d4d0c8] p-0 pr-[14px] text-center font-normal ${raised}`;
  return (
    <section className="flex min-w-0 flex-1 flex-col pt-[2px]">
      <div className="flex" role="tablist">
        <button role="tab" aria-selected="true" className="z-10 -mb-px h-[23px] w-[107px] rounded-t-[2px] border-t border-r-2 border-l border-t-white border-r-[#404040] border-l-white bg-[#d4d0c8] pb-[2px] pl-[10px] text-left">Result Table</button>
      </div>
      <div className="flex flex-1 border-t border-r-2 border-b-2 border-l border-t-white border-r-[#505050] border-b-[#505050] border-l-white">
        <div className="mt-[1px] mb-[1px] ml-[1px] flex-1 border-t-2 border-r-2 border-b-2 border-l-2 border-t-[#707070] border-r-white border-b-white border-l-[#606060]">
          <table className="w-full table-fixed border-separate border-spacing-0">
            <thead><tr><th className={th}>Name/OID</th><th className={th}>Value</th></tr></thead>
          </table>
        </div>
        <div className="flex w-[35px] flex-col items-center gap-[10px] border-t border-t-[#808080] pt-[9px] pr-[2px]">
          <button aria-label="Clear table"><svg viewBox="0 0 20 20" className="block size-5">
            <path d="M3 3h16v16H3z" fill="#111" /><path d="M5 5h12.500v12.500H5z" fill="#aaa" />
            {[5, 9.500, 14].map((x) => [5, 9.500, 14].map((y) => <rect key={`${x}-${y}`} x={x} y={y} width="3.500" height="3.500" fill="#fff" />))}
            <path d="M1.500 2L9.500 10M9.500 1.500L1.500 10" stroke="#4a0414" strokeWidth="3.600" strokeLinecap="round" /><path d="M1.500 2L9.500 10M9.500 1.500L1.500 10" stroke="#f03a62" strokeWidth="1.800" strokeLinecap="round" />
          </svg></button>
          <button aria-label="New document"><svg viewBox="0 0 20 20" className="block size-5">
            <path d="M3 1H13L18 6V19H3Z" fill="#c4eef2" stroke="#111" strokeWidth="1.500" /><path d="M4 4h1M4 7h2M4 10h2M4 13h2M4 16h2" stroke="#f08a90" /><path d="M7 6h5M7 9h9M7 12h9M7 15h9" stroke="#fff" /><path d="M12 1v6h6z" fill="#fff" stroke="#111" />
          </svg></button>
          <button aria-label="Stop"><svg viewBox="0 0 20 20" className="block size-5">
            <path d="M6 .5H14L19.500 6V14L14 19.500H6L.5 14V6Z" fill="#e0084a" stroke="#4a0418" />
            <text x="10" y="12.500" textAnchor="middle" fontFamily="'Liberation Sans', sans-serif" fontSize="6.500" fontWeight="700" fill="#fff">STOP</text>
          </svg></button>
        </div>
      </div>
    </section>
  );
}

function StatusBar() {
  return (
    <footer className="mt-[1px] flex h-5 shrink-0 items-stretch gap-[4px]">
      <div className="flex flex-1 items-center border border-[#808080] pl-[3px]">.iso.org.dod.internet.private.enterprises.managedstorage.divarchive</div>
      <div className="flex w-[76px] items-center justify-center border border-[#808080]">7:44:30 PM</div>
      <div className="flex">
        <div className="flex w-[100px] items-center justify-center border border-[#808080] bg-linear-to-r from-[#ffffdc] from-90% to-[#d4d0c8] to-90%">10M of 11M</div>
        <button aria-label="Collect garbage" className="flex w-[18px] items-center justify-center border border-l-0 border-[#808080]">
          <svg viewBox="0 0 12 14" className="h-[14px] w-3" aria-hidden="true"><path d="M2 5h8v8H2z" fill="url(#metal)" stroke="#333" /><path d="M.5 4.500L3 2.500H9L11.500 4.500" fill="#aaa" stroke="#333" /><path d="M4.500 2V1h3v1M.5 5h11M5 7v5M7 7v5" stroke="#555" fill="none" /></svg>
        </button>
      </div>
    </footer>
  );
}

function MibBrowserWindow() {
  return (
    <main className="absolute top-[77px] left-[360px] flex h-[774px] w-[1122px] flex-col border border-t-[#d4d0c8] border-l-[#d4d0c8] border-r-[#404040] border-b-[#404040] bg-[#d4d0c8] pt-[3px] pr-[2px] pb-[3px] pl-[3px] shadow-[inset_1px_1px_0_#fff,inset_-1px_-1px_0_#808080]">
      <TitleBar />
      <MenuBar />
      <Toolbar />
      <div className="flex min-h-0 flex-1">
        <LeftPane />
        <RightPane />
      </div>
      <StatusBar />
    </main>
  );
}

function Grip() {
  return <span className="h-[34px] w-[3px] shrink-0 border-l border-r border-l-white border-r-[#808080] bg-white" />;
}

function Taskbar() {
  return (
    <footer className="flex h-11 shrink-0 items-center border-t border-t-[#d4d0c8] bg-[#d4d0c8] pr-[2px] pl-[2px] shadow-[inset_0_1px_0_#fff]">
      <button className={`flex h-[38px] w-[52px] items-center gap-[1px] pl-[1px] text-[12px] font-bold ${raised}`}>
        <svg viewBox="0 0 16 16" className="size-4 shrink-0" aria-hidden="true">
          <path d="M2 2.500Q5 .8 8 2L7 7.500Q4 6.500 1 8Z" fill="#e8502a" /><path d="M9 2.300Q12 3.500 15.500 2.300L14.500 8Q11 9 8 7.800Z" fill="#86be3c" />
          <path d="M.8 9Q4 7.500 6.800 8.500L6 13.500Q3 12.500 0 14Z" fill="#3a86d8" /><path d="M7.800 9Q11 10 14.200 9.200L13.200 14.500Q10 15.500 7 14.300Z" fill="#f8c428" />
        </svg>
        Start
      </button>
      <span className="ml-[7px]" /><Grip />
      <button aria-label="Server Manager" className="ml-[18px]"><svg viewBox="0 0 32 32" className="block size-8">
        <path d="M2 1h11v28H2z" fill="#9aa3aa" /><path d="M13 1h7v20h-7z" fill="#6a7176" /><path d="M3 4h9M3 7h9M3 10h9M3 13h9M3 16h9M3 19h9" stroke="#e2e8ec" /><path d="M2 25h3v3H2z" fill="#4c4" />
        <path d="M7 19l14-3 9 3v9l-8 4-15-5z" fill="#8a969f" /><path d="M7 19l15 4 8-4" stroke="#e0e6ea" fill="none" /><path d="M14 17q0-4 4-3.500 4 .5 4 3.500" stroke="#555d63" fill="none" strokeWidth="1.600" /><path d="M22 23v8" stroke="#59646c" />
      </svg></button>
      <button aria-label="PowerShell" className="ml-4"><svg viewBox="0 0 32 32" className="block size-8">
        <path d="M8 5H29Q31 5 30.500 7L26 25Q25.500 27 23.500 27H3Q1 27 1.500 25L6 7Q6.500 5 8 5Z" fill="url(#psBlue)" stroke="#cfe4f4" strokeWidth="1.200" /><path d="M11 9.500L18 16L9 22.500M17 23h6" stroke="#fff" strokeWidth="2.300" fill="none" />
      </svg></button>
      <button aria-label="Explorer" className="ml-[18px]"><svg viewBox="0 0 48 48" className="block size-8"><LibrariesIcon /></svg></button>
      <button className={`ml-[10px] flex h-[38px] w-[160px] items-center gap-[3px] pl-[3px] ${raised}`}>
        <svg viewBox="0 0 48 48" className="size-8" aria-hidden="true"><AppWindowIcon /></svg>DD5proxy
      </button>
      <button aria-label="Services" className="ml-[10px]"><svg viewBox="0 0 48 48" className="block size-8"><ServicesIcon /></svg></button>
      <button aria-label="Firefox" className="ml-[18px]"><svg viewBox="0 0 48 48" className="block size-8"><FirefoxIcon /></svg></button>
      <button className="ml-[10px] flex h-[38px] w-[160px] items-center gap-[4px] border-2 border-t-[#505050] border-l-[#606060] border-r-[#e8e6e2] border-b-[#e8e6e2] bg-white pl-[2px] font-bold">
        <Flower className="size-8" /><span>iReasoning MIB Br...</span>
      </button>
      <span className="ml-[323px]" /><Grip />
      <span className="flex-1" />
      <Grip />
      <button aria-label="Keyboard" className="ml-2"><svg viewBox="0 0 16 16" className="block size-4">
        <rect x=".5" y="6.500" width="15" height="8.500" rx="1.500" fill="#ecebe8" stroke="#808080" /><path d="M2.500 9h11M2.500 11h11M4.500 13h7" stroke="#808080" strokeDasharray="1.500 .8" /><path d="M3 6Q3 3 6 4T10 3T14 1" stroke="#808080" fill="none" />
      </svg></button>
      <span className="ml-1 h-[22px] w-px bg-white" />
      <div className="ml-[4px] flex h-[38px] w-[196px] items-center border border-t-[#808080] border-l-[#808080] border-r-white border-b-white pl-[5px]">
        <button aria-label="Show hidden icons"><svg viewBox="0 0 8 10" className="h-[10px] w-2"><path d="M1 4.500L4 1.500L7 4.500M1 9L4 6L7 9" stroke="#000" strokeWidth="1.500" fill="none" /></svg></button>
        <svg viewBox="0 0 18 18" className="ml-2 size-[18px]" role="img" aria-label="Action center"><path d="M3 1v16" stroke="#707070" strokeWidth="2" /><path d="M4 3Q8 1 11 4H16L14 10Q11 11 9 9H4Z" fill="#fff" stroke="#808080" /></svg>
        <svg viewBox="0 0 18 18" className="ml-[6px] size-[18px]" role="img" aria-label="Power"><path d="M3 3h8v13H3z" fill="#fff" stroke="#707070" strokeWidth="1.500" /><path d="M5 5h2v9H5z" fill="#999" /><path d="M7 6h9v4q0 3-3 3v3h-3v-3q-3 0-3-3z" fill="#fff" stroke="#606060" /><path d="M9.500 2v4M13.500 2v4" stroke="#606060" strokeWidth="1.500" /></svg>
        <svg viewBox="0 0 18 18" className="ml-[6px] size-[18px]" role="img" aria-label="Network"><rect x="5.500" y="4.500" width="11" height="9" fill="#c4c4c0" stroke="#606060" /><path d="M7 16.500h8M11 14v2" stroke="#606060" /><path d="M1.500 1.500v4h4v-4M3.500 5.500v9h4" stroke="#606060" fill="none" strokeWidth="1.500" /></svg>
        <svg viewBox="0 0 18 18" className="ml-[6px] size-[18px]" role="img" aria-label="Volume"><path d="M1 6h3l5-4v14l-5-4H1z" fill="#fff" stroke="#808080" /><path d="M11 6q2 3 0 6M13 4q3.500 5 0 10M15 2q5 7 0 14" stroke="#909090" fill="none" /></svg>
        <div className="flex-1 pt-[1px] pl-[3px] text-center leading-4"><p>7:44 PM</p><p>6/21/2016</p></div>
        <button aria-label="Show desktop" className="mr-[1px]"><svg viewBox="0 0 16 14" className="block h-[14px] w-4"><path d="M0 1h16v12H0z" fill="#1c5fb8" /><path d="M0 1h16v4L0 10z" fill="#4a94e0" /><path d="M0 11h16v2H0z" fill="#222" /><circle cx="2.500" cy="11" r="2" fill="#f0a020" /></svg></button>
      </div>
    </footer>
  );
}

export default function App() {
  return (
    <div className="flex min-h-screen flex-col overflow-hidden bg-[#573f7d] font-['DejaVu_Sans_Condensed','Noto_Sans',sans-serif] text-[11px] leading-[13px] text-black">
      <SharedDefs />
      <div className="relative flex-1">
        <ul className="grid w-fit auto-cols-[76px] grid-flow-col grid-rows-[repeat(10,103px)]">
          {desktopItems.map((item) => (
            <li key={item.label}>
              <a href="#" className="flex flex-col items-center pt-[7px] text-center whitespace-pre text-white">
                <svg viewBox="0 0 48 48" className="mb-1 size-12 overflow-visible" aria-hidden="true">
                  {item.icon}
                  {item.shortcut && <ShortcutArrow />}
                </svg>
                <span className="pr-[2px]">{item.label}</span>
              </a>
            </li>
          ))}
        </ul>
        <MibBrowserWindow />
      </div>
      <Taskbar />
    </div>
  );
}
